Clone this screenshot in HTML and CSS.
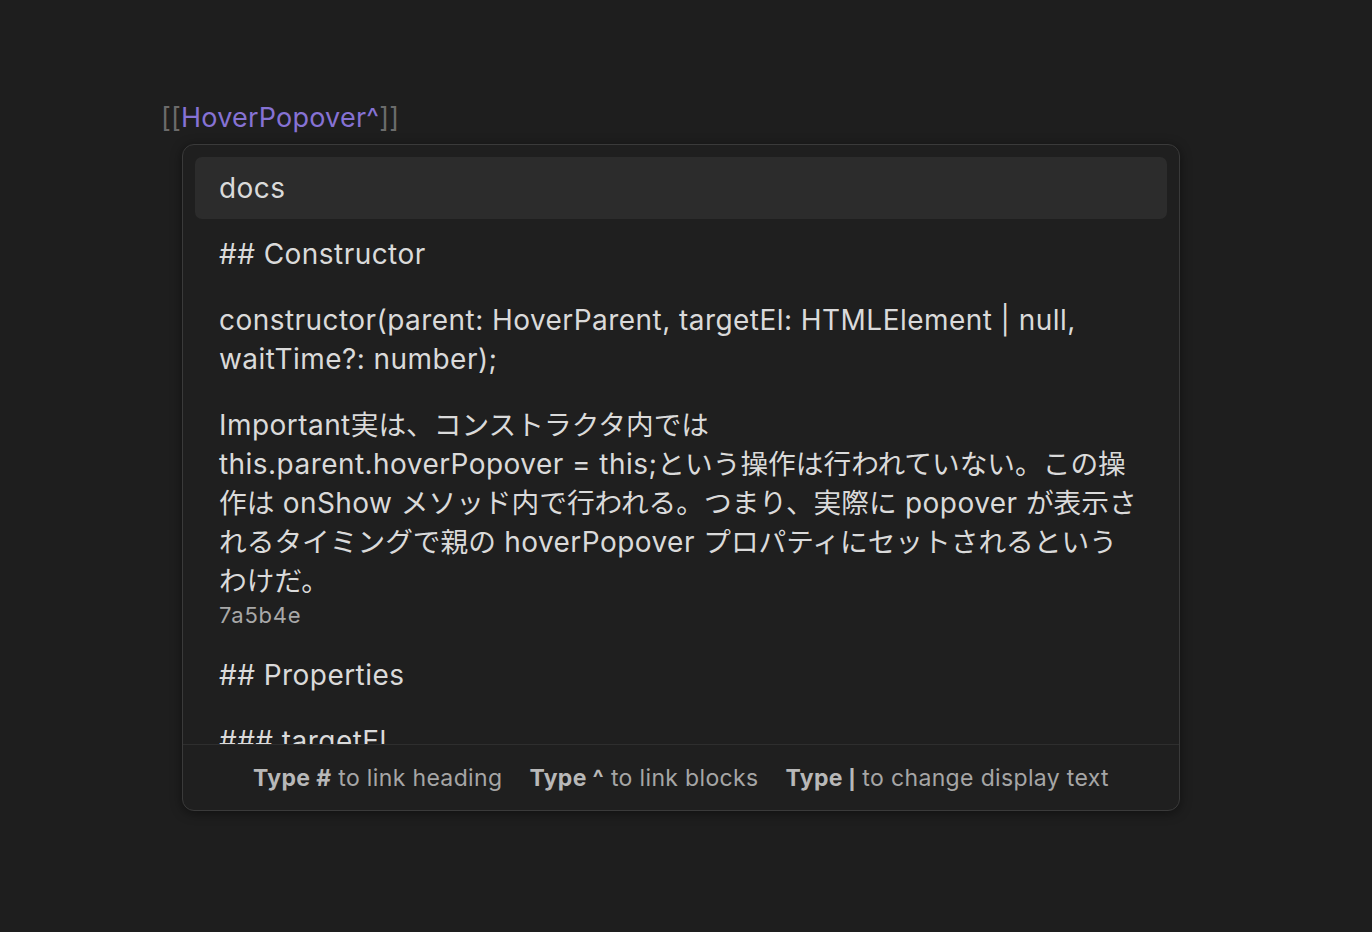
FILE: index.html
```html
<!DOCTYPE html>
<html lang="ja">
<head>
<meta charset="utf-8">
<title>Link suggestion</title>
<link rel="stylesheet" href="styles.css">
</head>
<body>
<div class="editor">
  <div class="link-line"><span class="bracket">[[</span><span class="link">HoverPopover^</span><span class="bracket">]]</span></div>
  <div class="popup">
    <div class="list">
      <div class="item selected">docs</div>
      <div class="item">## Constructor</div>
      <div class="item">constructor(parent: HoverParent, targetEl: HTMLElement | null,<br>waitTime?: number);</div>
      <div class="item">Important<span class="ja">実は、コンストラクタ内では</span><br>this.parent.hoverPopover = this;<span class="ja">という操作は行われていない。この操</span><br><span class="ja">作は</span> onShow <span class="ja">メソッド内で行われる。つまり、実際に</span> popover <span class="ja">が表示さ</span><br><span class="ja">れるタイミングで親の</span> hoverPopover <span class="ja">プロパティにセットされるという</span><br><span class="ja">わけだ。</span><div class="hash">7a5b4e</div></div>
      <div class="item">## Properties</div>
      <div class="item">### targetEl</div>
    </div>
    <div class="footer">
      <span class="hint"><b>Type #</b> to link heading</span>
      <span class="hint"><b>Type ^</b> to link blocks</span>
      <span class="hint"><b>Type <span class="pipe">|</span></b> to change display text</span>
    </div>
  </div>
</div>
</body>
</html>
```
FILE: styles.css
```css
html, body {
  margin: 0;
  padding: 0;
  background: #1e1e1e;
  height: 100%;
}
body {
  font-family: Inter, "Noto Sans CJK JP", sans-serif;
  color: #dadada;
}
.editor {
  padding: 101px 0 0 161px;
}
.link-line {
  font-size: 27px;
  letter-spacing: 0.2px;
  line-height: 34px;
  height: 33px;
}
.bracket {
  color: #6b6b6b;
}
.link {
  color: #8672d4;
}
.popup {
  margin: 10px 0 0 21px;
  width: 996px;
  height: 665px;
  border: 1px solid #3a3a3a;
  border-radius: 12px;
  background: #1f1f1f;
  box-shadow: 0 2px 12px rgba(0, 0, 0, 0.45);
  display: flex;
  flex-direction: column;
  overflow: hidden;
}
.list {
  flex: 1;
  overflow: hidden;
  padding: 12px 12px 0 12px;
  display: flex;
  flex-direction: column;
  gap: 4px;
}
.item {
  flex: none;
  padding: 11.5px 24px;
  font-size: 28px;
  letter-spacing: 0.45px;
  line-height: 39px;
  border-radius: 7px;
  white-space: nowrap;
}
.ja {
  letter-spacing: 0;
  font-size: 27.7px;
}
.item.selected {
  background: #2c2c2c;
}
.hash {
  font-size: 22px;
  letter-spacing: 0.8px;
  line-height: 28px;
  color: #a8a8a8;
}
.footer {
  flex: none;
  height: 65px;
  border-top: 1px solid #2e2e2e;
  display: flex;
  justify-content: center;
  align-items: center;
  gap: 27px;
  font-size: 23px;
  letter-spacing: 0.35px;
  color: #a6a6a6;
}
.footer b {
  font-weight: 700;
  color: #b8b8b8;
}
.pipe {
  font-family: "Liberation Sans", sans-serif;
}
```
